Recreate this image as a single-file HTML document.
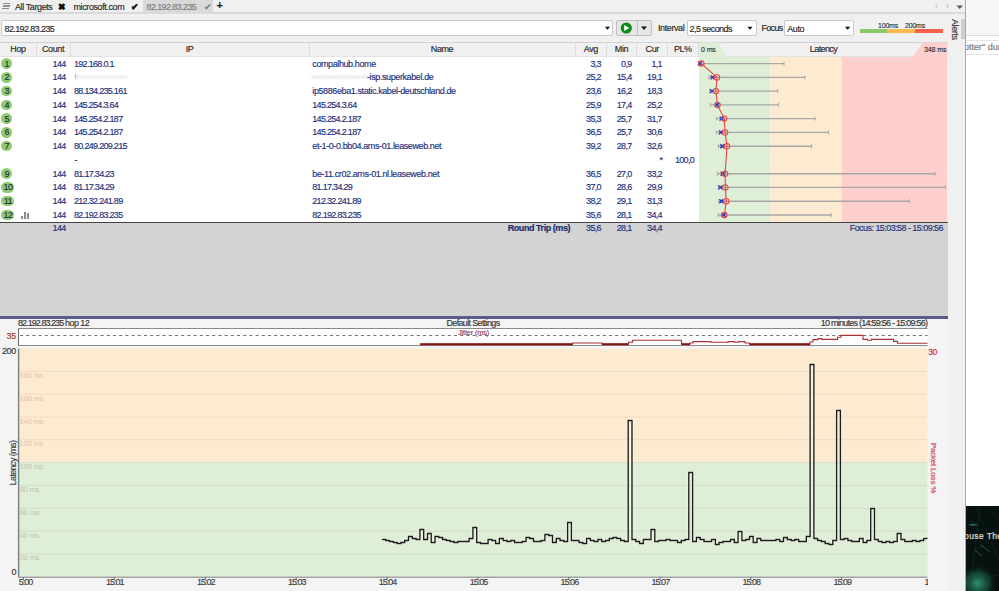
<!DOCTYPE html><html><head><meta charset="utf-8"><style>
html,body{margin:0;padding:0;}
body{width:999px;height:591px;overflow:hidden;position:relative;background:#f0f0f0;font-family:"Liberation Sans",sans-serif;}
div{position:absolute;}
.t{font-size:9px;line-height:12px;letter-spacing:-0.4px;color:#262626;white-space:nowrap;-webkit-text-stroke:0.15px currentColor;}
.n{font-size:9px;line-height:12px;letter-spacing:-0.7px;color:#22307a;white-space:nowrap;-webkit-text-stroke:0.15px currentColor;}
.nv{font-size:9px;line-height:12px;letter-spacing:-0.4px;color:#22307a;white-space:nowrap;-webkit-text-stroke:0.15px currentColor;}
.s{font-size:7px;line-height:12px;letter-spacing:-0.2px;color:#262626;white-space:nowrap;-webkit-text-stroke:0.1px currentColor;}
svg{position:absolute;left:0;top:0;}
</style></head><body>
<div style="left:966px;top:0;width:33px;height:35px;background:#f5f6f8"></div>
<div style="left:966px;top:35px;width:33px;height:1px;background:#dcdcdc"></div>
<div style="left:966px;top:36px;width:33px;height:470px;background:#ffffff"></div>
<div style="left:966px;top:40px;width:33px;height:1px;background:#e6e6e6"></div>
<div style="left:966px;top:54px;width:33px;height:1px;background:#e6e6e6"></div>
<div class="t" style="left:964px;top:41px;color:#777;font-size:9px;letter-spacing:0">otter" dur</div>
<div style="left:966px;top:506px;width:33px;height:85px;background:#071210"></div>
<svg width="999" height="591" style="left:0;top:0"><defs><radialGradient id="gb" cx="0.35" cy="0.75" r="0.6"><stop offset="0" stop-color="#2f9a70" stop-opacity="0.95"/><stop offset="0.6" stop-color="#1c5a44" stop-opacity="0.6"/><stop offset="1" stop-color="#071210" stop-opacity="0"/></radialGradient><radialGradient id="gt" cx="0.5" cy="0.5" r="0.5"><stop offset="0" stop-color="#4fb8b0" stop-opacity="0.9"/><stop offset="1" stop-color="#071210" stop-opacity="0"/></radialGradient></defs><rect x="966" y="560" width="33" height="31" fill="url(#gb)"/><ellipse cx="973" cy="524.8" rx="8" ry="1.8" fill="url(#gt)"/><path d="M966 515 L990 540 M975 506 L999 560 M966 560 L999 530 M980 506 L970 590 M990 506 L999 520 M966 580 L999 575" stroke="#1a3a36" stroke-width="0.6" opacity="0.6"/><path d="M980 545 L985 548 L990 552 M975 550 L982 556" stroke="#2e6f60" stroke-width="1" fill="none" opacity="0.7"/></svg>
<div class="t" style="left:964px;top:530px;color:#e6e2da;font-size:8.5px;letter-spacing:0.4px">ouse The</div>
<div style="left:965px;top:0;width:1px;height:591px;background:#a9a9a9"></div>
<div style="left:0;top:12px;width:965px;height:2px;background:#dadada"></div>
<div style="left:143px;top:0;width:70px;height:12px;background:#d9d9d9"></div>
<div style="left:3.4px;top:3.2px;width:6.8px;height:1.3px;background:#8d8d8d"></div>
<div style="left:3.0px;top:5.4px;width:6.8px;height:1.3px;background:#8d8d8d"></div>
<div style="left:2.2px;top:7.6px;width:6.8px;height:1.3px;background:#8d8d8d"></div>
<div class="t" style="left:15px;top:0.50px;">All Targets</div>
<div class="t" style="left:58px;top:1px;font-size:9px;font-weight:bold;letter-spacing:0;color:#111">&#x2716;</div>
<div class="t" style="left:73.5px;top:0.50px;">microsoft.com</div>
<div class="t" style="left:130.5px;top:1px;font-size:9px;font-weight:bold;color:#111">&#x2714;</div>
<div class="t" style="left:146.5px;top:1px;letter-spacing:-0.6px;color:#7d7d7d">82.192.83.235</div>
<div class="t" style="left:203.5px;top:1px;font-size:9px;color:#7d7d7d">&#x2714;</div>
<div class="t" style="left:216.5px;top:-1px;font-size:11px;font-weight:bold;color:#222">+</div>
<div class="t" style="left:935px;top:0px;color:#bbb;font-size:9px">&#x2039;</div>
<div class="t" style="left:946px;top:0px;color:#bbb;font-size:9px">&#x203a;</div>
<svg width="999" height="20" style="left:0;top:0"><path d="M956.5 5.5 L963 5.5 L959.75 9 Z" fill="#555"/></svg>
<div style="left:0.5px;top:20px;width:610.5px;height:14px;background:#fff;border:1px solid #c9c9c9;border-radius:2px"></div>
<svg width="999" height="50" style="left:0;top:0"><path d="M604.9 26.8 L610.1 26.8 L607.5 29.8 Z" fill="#111"/></svg>
<div class="t" style="left:4.5px;top:22.5px;letter-spacing:-0.6px;color:#1f1f1f">82.192.83.235</div>
<div style="left:615.5px;top:20px;width:34.5px;height:14px;background:#e6e6e6;border:1px solid #bfbfbf;border-radius:2px"></div>
<div style="left:636.5px;top:21px;width:1px;height:14px;background:#c3c3c3"></div>
<svg width="999" height="50" style="left:0;top:0"><circle cx="626.3" cy="28" r="5.6" fill="#0f8a17"/><path d="M624.2 25 L629.3 28 L624.2 31 Z" fill="#fff"/><path d="M641 26.5 L647 26.5 L644 30 Z" fill="#111"/></svg>
<div class="t" style="left:658px;top:22.00px;">Interval</div>
<div style="left:686.5px;top:20px;width:68.5px;height:14px;background:#fff;border:1px solid #c9c9c9;border-radius:2px"></div>
<svg width="999" height="50" style="left:0;top:0"><path d="M747.4 26.8 L752.6 26.8 L750 29.8 Z" fill="#111"/></svg>
<div class="t" style="left:689.5px;top:22.5px;letter-spacing:-0.55px">2,5 seconds</div>
<div class="t" style="left:761.5px;top:22.00px;letter-spacing:-0.7px">Focus</div>
<div style="left:784px;top:20px;width:68.0px;height:14px;background:#fff;border:1px solid #c9c9c9;border-radius:2px"></div>
<svg width="999" height="50" style="left:0;top:0"><path d="M845.0 26.8 L850.2 26.8 L847.6 29.8 Z" fill="#111"/></svg>
<div class="t" style="left:787.2px;top:22.5px">Auto</div>
<div style="left:860px;top:29px;width:27px;height:4px;background:#8ac96b"></div>
<div style="left:887px;top:29px;width:28px;height:4px;background:#fdba4e"></div>
<div style="left:915px;top:29px;width:27.5px;height:4px;background:#f9614e"></div>
<div class="s" style="left:878px;top:19.5px">100ms</div>
<div class="s" style="left:905px;top:19.5px">200ms</div>
<div style="left:947.5px;top:14px;width:17.5px;height:577px;background:#f0f0f0"></div>
<div class="t" style="left:945px;top:23px;width:20px;text-align:center;transform:rotate(90deg);color:#333">Alerts</div>
<div style="left:960.7px;top:18.6px;width:4px;height:20px;background:#cdcdcd"></div>
<div style="left:0;top:41.5px;width:947.5px;height:1px;background:#d2d2d2"></div>
<div style="left:0;top:42.5px;width:947.5px;height:14px;background:#f0f0f0"></div>
<div style="left:0;top:56px;width:947.5px;height:1px;background:#e3e3e3"></div>
<div style="left:35.5px;top:42.5px;width:1px;height:13.5px;background:#dcdcdc"></div>
<div style="left:69.8px;top:42.5px;width:1px;height:13.5px;background:#dcdcdc"></div>
<div style="left:308.5px;top:42.5px;width:1px;height:13.5px;background:#dcdcdc"></div>
<div style="left:574.9px;top:42.5px;width:1px;height:13.5px;background:#dcdcdc"></div>
<div style="left:605.7px;top:42.5px;width:1px;height:13.5px;background:#dcdcdc"></div>
<div style="left:636.3px;top:42.5px;width:1px;height:13.5px;background:#dcdcdc"></div>
<div style="left:667.1px;top:42.5px;width:1px;height:13.5px;background:#dcdcdc"></div>
<div class="t" style="left:-82.00px;width:200px;text-align:center;top:43.00px;">Hop</div>
<div class="t" style="left:-47.00px;width:200px;text-align:center;top:43.00px;">Count</div>
<div class="t" style="left:89.50px;width:200px;text-align:center;top:43.00px;">IP</div>
<div class="t" style="left:342.00px;width:200px;text-align:center;top:43.00px;">Name</div>
<div class="t" style="left:490.80px;width:200px;text-align:center;top:43.00px;">Avg</div>
<div class="t" style="left:521.50px;width:200px;text-align:center;top:43.00px;">Min</div>
<div class="t" style="left:552.20px;width:200px;text-align:center;top:43.00px;">Cur</div>
<div class="t" style="left:582.80px;width:200px;text-align:center;top:43.00px;">PL%</div>
<div style="left:0;top:57px;width:947.5px;height:165px;background:#fff"></div>
<svg width="999" height="240" style="left:0;top:0">
<rect x="699" y="57" width="71.41" height="165" fill="#dfeed6"/>
<rect x="770.41" y="57" width="71.41" height="165" fill="#fdebd1"/>
<rect x="841.82" y="57" width="105.68" height="165" fill="#fdd0cd"/>
<polygon points="699,42.5 717,42.5 727,57 699,57" fill="#dfeed6"/>
<polygon points="923.1,42.5 947.5,42.5 947.5,57 912.9,57" fill="#fdd0cd"/>
</svg>
<div style="left:698px;top:42.5px;width:1px;height:14px;background:#dcdcdc"></div>
<div class="s" style="left:701px;top:43.5px;letter-spacing:-0.1px">0 ms</div>
<div class="s" style="left:924px;top:43.5px;letter-spacing:-0.1px">348 ms</div>
<div class="t" style="left:723.50px;width:200px;text-align:center;top:42.50px;letter-spacing:-0.6px">Latency</div>
<div style="left:1.3px;top:58.30px;width:11px;height:10.6px;border-radius:6px;background:#8fca6c"></div>
<div class="n" style="left:1.3px;width:11px;text-align:center;top:57.60px;color:#1d2b55;letter-spacing:-0.5px">1</div>
<div class="n" style="right:933.50px;top:57.60px;">144</div>
<div class="n" style="left:74px;top:57.60px;">192.168.0.1</div>
<div class="nv" style="left:312.3px;top:57.60px;">compalhub.home</div>
<div class="n" style="right:398.20px;top:57.60px;">3,3</div>
<div class="n" style="right:367.50px;top:57.60px;">0,9</div>
<div class="n" style="right:337.20px;top:57.60px;">1,1</div>
<div style="left:1.3px;top:72.06px;width:11px;height:10.6px;border-radius:6px;background:#8fca6c"></div>
<div class="n" style="left:1.3px;width:11px;text-align:center;top:71.36px;color:#1d2b55;letter-spacing:-0.5px">2</div>
<div class="n" style="right:933.50px;top:71.36px;">144</div>
<div class="nv" style="left:75px;top:71.36px;color:#bdbdbd;filter:blur(1.1px);opacity:0.75;letter-spacing:-0.3px">t~~~~~~~~~~</div>
<div style="left:74.5px;top:74.36px;width:1px;height:5px;background:#d9a0a0;opacity:0.8"></div>
<div class="nv" style="left:311px;top:71.36px;color:#b8b8b8;filter:blur(1.1px);opacity:0.75;letter-spacing:-0.3px">~~~~~~~~~~~~~~~~</div>
<div class="nv" style="left:367px;top:71.36px;">-isp.superkabel.de</div>
<div class="n" style="right:398.20px;top:71.36px;">25,2</div>
<div class="n" style="right:367.50px;top:71.36px;">15,4</div>
<div class="n" style="right:337.20px;top:71.36px;">19,1</div>
<div style="left:1.3px;top:85.82px;width:11px;height:10.6px;border-radius:6px;background:#8fca6c"></div>
<div class="n" style="left:1.3px;width:11px;text-align:center;top:85.12px;color:#1d2b55;letter-spacing:-0.5px">3</div>
<div class="n" style="right:933.50px;top:85.12px;">144</div>
<div class="n" style="left:74px;top:85.12px;">88.134.235.161</div>
<div class="nv" style="left:312.3px;top:85.12px;">ip5886eba1.static.kabel-deutschland.de</div>
<div class="n" style="right:398.20px;top:85.12px;">23,6</div>
<div class="n" style="right:367.50px;top:85.12px;">16,2</div>
<div class="n" style="right:337.20px;top:85.12px;">18,3</div>
<div style="left:1.3px;top:99.58px;width:11px;height:10.6px;border-radius:6px;background:#8fca6c"></div>
<div class="n" style="left:1.3px;width:11px;text-align:center;top:98.88px;color:#1d2b55;letter-spacing:-0.5px">4</div>
<div class="n" style="right:933.50px;top:98.88px;">144</div>
<div class="n" style="left:74px;top:98.88px;">145.254.3.64</div>
<div class="n" style="left:312.3px;top:98.88px;">145.254.3.64</div>
<div class="n" style="right:398.20px;top:98.88px;">25,9</div>
<div class="n" style="right:367.50px;top:98.88px;">17,4</div>
<div class="n" style="right:337.20px;top:98.88px;">25,2</div>
<div style="left:1.3px;top:113.34px;width:11px;height:10.6px;border-radius:6px;background:#8fca6c"></div>
<div class="n" style="left:1.3px;width:11px;text-align:center;top:112.64px;color:#1d2b55;letter-spacing:-0.5px">5</div>
<div class="n" style="right:933.50px;top:112.64px;">144</div>
<div class="n" style="left:74px;top:112.64px;">145.254.2.187</div>
<div class="n" style="left:312.3px;top:112.64px;">145.254.2.187</div>
<div class="n" style="right:398.20px;top:112.64px;">35,3</div>
<div class="n" style="right:367.50px;top:112.64px;">25,7</div>
<div class="n" style="right:337.20px;top:112.64px;">31,7</div>
<div style="left:1.3px;top:127.10px;width:11px;height:10.6px;border-radius:6px;background:#8fca6c"></div>
<div class="n" style="left:1.3px;width:11px;text-align:center;top:126.40px;color:#1d2b55;letter-spacing:-0.5px">6</div>
<div class="n" style="right:933.50px;top:126.40px;">144</div>
<div class="n" style="left:74px;top:126.40px;">145.254.2.187</div>
<div class="n" style="left:312.3px;top:126.40px;">145.254.2.187</div>
<div class="n" style="right:398.20px;top:126.40px;">36,5</div>
<div class="n" style="right:367.50px;top:126.40px;">25,7</div>
<div class="n" style="right:337.20px;top:126.40px;">30,6</div>
<div style="left:1.3px;top:140.86px;width:11px;height:10.6px;border-radius:6px;background:#8fca6c"></div>
<div class="n" style="left:1.3px;width:11px;text-align:center;top:140.16px;color:#1d2b55;letter-spacing:-0.5px">7</div>
<div class="n" style="right:933.50px;top:140.16px;">144</div>
<div class="n" style="left:74px;top:140.16px;">80.249.209.215</div>
<div class="nv" style="left:312.3px;top:140.16px;">et-1-0-0.bb04.ams-01.leaseweb.net</div>
<div class="n" style="right:398.20px;top:140.16px;">39,2</div>
<div class="n" style="right:367.50px;top:140.16px;">28,7</div>
<div class="n" style="right:337.20px;top:140.16px;">32,6</div>
<div class="nv" style="left:74.5px;top:153.92px;">-</div>
<div class="n" style="left:659.5px;top:154.42px">*</div>
<div class="n" style="right:305.00px;top:153.92px;">100,0</div>
<div style="left:1.3px;top:168.38px;width:11px;height:10.6px;border-radius:6px;background:#8fca6c"></div>
<div class="n" style="left:1.3px;width:11px;text-align:center;top:167.68px;color:#1d2b55;letter-spacing:-0.5px">9</div>
<div class="n" style="right:933.50px;top:167.68px;">144</div>
<div class="n" style="left:74px;top:167.68px;">81.17.34.23</div>
<div class="nv" style="left:312.3px;top:167.68px;">be-11.cr02.ams-01.nl.leaseweb.net</div>
<div class="n" style="right:398.20px;top:167.68px;">36,5</div>
<div class="n" style="right:367.50px;top:167.68px;">27,0</div>
<div class="n" style="right:337.20px;top:167.68px;">33,2</div>
<div style="left:1.3px;top:182.14px;width:13.2px;height:10.6px;border-radius:6px;background:#8fca6c"></div>
<div class="n" style="left:1.3px;width:13.2px;text-align:center;top:181.44px;color:#1d2b55;letter-spacing:-0.5px">10</div>
<div class="n" style="right:933.50px;top:181.44px;">144</div>
<div class="n" style="left:74px;top:181.44px;">81.17.34.29</div>
<div class="n" style="left:312.3px;top:181.44px;">81.17.34.29</div>
<div class="n" style="right:398.20px;top:181.44px;">37,0</div>
<div class="n" style="right:367.50px;top:181.44px;">28,6</div>
<div class="n" style="right:337.20px;top:181.44px;">29,9</div>
<div style="left:1.3px;top:195.90px;width:13.2px;height:10.6px;border-radius:6px;background:#8fca6c"></div>
<div class="n" style="left:1.3px;width:13.2px;text-align:center;top:195.20px;color:#1d2b55;letter-spacing:-0.5px">11</div>
<div class="n" style="right:933.50px;top:195.20px;">144</div>
<div class="n" style="left:74px;top:195.20px;">212.32.241.89</div>
<div class="n" style="left:312.3px;top:195.20px;">212.32.241.89</div>
<div class="n" style="right:398.20px;top:195.20px;">38,2</div>
<div class="n" style="right:367.50px;top:195.20px;">29,1</div>
<div class="n" style="right:337.20px;top:195.20px;">31,3</div>
<div style="left:1.3px;top:209.66px;width:13.2px;height:10.6px;border-radius:6px;background:#8fca6c"></div>
<div class="n" style="left:1.3px;width:13.2px;text-align:center;top:208.96px;color:#1d2b55;letter-spacing:-0.5px">12</div>
<div class="n" style="right:933.50px;top:208.96px;">144</div>
<div class="n" style="left:74px;top:208.96px;">82.192.83.235</div>
<div class="n" style="left:312.3px;top:208.96px;">82.192.83.235</div>
<div class="n" style="right:398.20px;top:208.96px;">35,6</div>
<div class="n" style="right:367.50px;top:208.96px;">28,1</div>
<div class="n" style="right:337.20px;top:208.96px;">34,4</div>
<svg width="999" height="240" style="left:0;top:0">
<line x1="698.6" y1="63.6" x2="784.0" y2="63.6" stroke="#a7a7a7" stroke-width="1.4"/>
<line x1="784.0" y1="61.6" x2="784.0" y2="65.6" stroke="#a7a7a7" stroke-width="1"/>
<line x1="698.6" y1="61.6" x2="698.6" y2="65.6" stroke="#a7a7a7" stroke-width="1"/>
<line x1="709.0" y1="77.4" x2="804.9" y2="77.4" stroke="#a7a7a7" stroke-width="1.4"/>
<line x1="804.9" y1="75.4" x2="804.9" y2="79.4" stroke="#a7a7a7" stroke-width="1"/>
<line x1="709.0" y1="75.4" x2="709.0" y2="79.4" stroke="#a7a7a7" stroke-width="1"/>
<line x1="709.6" y1="91.1" x2="777.8" y2="91.1" stroke="#a7a7a7" stroke-width="1.4"/>
<line x1="777.8" y1="89.1" x2="777.8" y2="93.1" stroke="#a7a7a7" stroke-width="1"/>
<line x1="709.6" y1="89.1" x2="709.6" y2="93.1" stroke="#a7a7a7" stroke-width="1"/>
<line x1="710.4" y1="104.9" x2="778.6" y2="104.9" stroke="#a7a7a7" stroke-width="1.4"/>
<line x1="778.6" y1="102.9" x2="778.6" y2="106.9" stroke="#a7a7a7" stroke-width="1"/>
<line x1="710.4" y1="102.9" x2="710.4" y2="106.9" stroke="#a7a7a7" stroke-width="1"/>
<line x1="716.4" y1="118.6" x2="815.1" y2="118.6" stroke="#a7a7a7" stroke-width="1.4"/>
<line x1="815.1" y1="116.6" x2="815.1" y2="120.6" stroke="#a7a7a7" stroke-width="1"/>
<line x1="716.4" y1="116.6" x2="716.4" y2="120.6" stroke="#a7a7a7" stroke-width="1"/>
<line x1="716.4" y1="132.4" x2="828.4" y2="132.4" stroke="#a7a7a7" stroke-width="1.4"/>
<line x1="828.4" y1="130.4" x2="828.4" y2="134.4" stroke="#a7a7a7" stroke-width="1"/>
<line x1="716.4" y1="130.4" x2="716.4" y2="134.4" stroke="#a7a7a7" stroke-width="1"/>
<line x1="718.5" y1="146.2" x2="811.6" y2="146.2" stroke="#a7a7a7" stroke-width="1.4"/>
<line x1="811.6" y1="144.2" x2="811.6" y2="148.2" stroke="#a7a7a7" stroke-width="1"/>
<line x1="718.5" y1="144.2" x2="718.5" y2="148.2" stroke="#a7a7a7" stroke-width="1"/>
<line x1="717.3" y1="173.7" x2="935.1" y2="173.7" stroke="#a7a7a7" stroke-width="1.4"/>
<line x1="935.1" y1="171.7" x2="935.1" y2="175.7" stroke="#a7a7a7" stroke-width="1"/>
<line x1="717.3" y1="171.7" x2="717.3" y2="175.7" stroke="#a7a7a7" stroke-width="1"/>
<line x1="718.4" y1="187.4" x2="945.4" y2="187.4" stroke="#a7a7a7" stroke-width="1.4"/>
<line x1="945.4" y1="185.4" x2="945.4" y2="189.4" stroke="#a7a7a7" stroke-width="1"/>
<line x1="718.4" y1="185.4" x2="718.4" y2="189.4" stroke="#a7a7a7" stroke-width="1"/>
<line x1="718.8" y1="201.2" x2="909.5" y2="201.2" stroke="#a7a7a7" stroke-width="1.4"/>
<line x1="909.5" y1="199.2" x2="909.5" y2="203.2" stroke="#a7a7a7" stroke-width="1"/>
<line x1="718.8" y1="199.2" x2="718.8" y2="203.2" stroke="#a7a7a7" stroke-width="1"/>
<line x1="718.1" y1="215.0" x2="831.1" y2="215.0" stroke="#a7a7a7" stroke-width="1.4"/>
<line x1="831.1" y1="213.0" x2="831.1" y2="217.0" stroke="#a7a7a7" stroke-width="1"/>
<line x1="718.1" y1="213.0" x2="718.1" y2="217.0" stroke="#a7a7a7" stroke-width="1"/>
<polyline points="701.4,63.6 717.0,77.4 715.9,91.1 717.5,104.9 724.2,118.6 725.1,132.4 727.0,146.2 725.1,173.7 725.4,187.4 726.3,201.2 724.4,215.0" fill="none" stroke="#e8473e" stroke-width="1.1"/>
<path d="M697.8 61.6 L701.8 65.6 M697.8 65.6 L701.8 61.6" stroke="#1a2fd0" stroke-width="1.3"/>
<circle cx="701.4" cy="63.6" r="2.7" fill="none" stroke="#e8473e" stroke-width="1.05"/>
<path d="M710.6 75.4 L714.6 79.4 M710.6 79.4 L714.6 75.4" stroke="#1a2fd0" stroke-width="1.3"/>
<circle cx="717.0" cy="77.4" r="2.7" fill="none" stroke="#e8473e" stroke-width="1.05"/>
<path d="M710.1 89.1 L714.1 93.1 M710.1 93.1 L714.1 89.1" stroke="#1a2fd0" stroke-width="1.3"/>
<circle cx="715.9" cy="91.1" r="2.7" fill="none" stroke="#e8473e" stroke-width="1.05"/>
<path d="M715.0 102.9 L719.0 106.9 M715.0 106.9 L719.0 102.9" stroke="#1a2fd0" stroke-width="1.3"/>
<circle cx="717.5" cy="104.9" r="2.7" fill="none" stroke="#e8473e" stroke-width="1.05"/>
<path d="M719.6 116.6 L723.6 120.6 M719.6 120.6 L723.6 116.6" stroke="#1a2fd0" stroke-width="1.3"/>
<circle cx="724.2" cy="118.6" r="2.7" fill="none" stroke="#e8473e" stroke-width="1.05"/>
<path d="M718.9 130.4 L722.9 134.4 M718.9 134.4 L722.9 130.4" stroke="#1a2fd0" stroke-width="1.3"/>
<circle cx="725.1" cy="132.4" r="2.7" fill="none" stroke="#e8473e" stroke-width="1.05"/>
<path d="M720.3 144.2 L724.3 148.2 M720.3 148.2 L724.3 144.2" stroke="#1a2fd0" stroke-width="1.3"/>
<circle cx="727.0" cy="146.2" r="2.7" fill="none" stroke="#e8473e" stroke-width="1.05"/>
<path d="M720.7 171.7 L724.7 175.7 M720.7 175.7 L724.7 171.7" stroke="#1a2fd0" stroke-width="1.3"/>
<circle cx="725.1" cy="173.7" r="2.7" fill="none" stroke="#e8473e" stroke-width="1.05"/>
<path d="M718.4 185.4 L722.4 189.4 M718.4 189.4 L722.4 185.4" stroke="#1a2fd0" stroke-width="1.3"/>
<circle cx="725.4" cy="187.4" r="2.7" fill="none" stroke="#e8473e" stroke-width="1.05"/>
<path d="M719.4 199.2 L723.4 203.2 M719.4 203.2 L723.4 199.2" stroke="#1a2fd0" stroke-width="1.3"/>
<circle cx="726.3" cy="201.2" r="2.7" fill="none" stroke="#e8473e" stroke-width="1.05"/>
<path d="M721.6 213.0 L725.6 217.0 M721.6 217.0 L725.6 213.0" stroke="#1a2fd0" stroke-width="1.3"/>
<circle cx="724.4" cy="215.0" r="2.7" fill="none" stroke="#e8473e" stroke-width="1.05"/>
</svg>
<div style="left:21.2px;top:215.5px;width:1.6px;height:3px;background:#8a8a8a"></div>
<div style="left:24.2px;top:211.5px;width:1.6px;height:7px;background:#8a8a8a"></div>
<div style="left:27.2px;top:213px;width:1.6px;height:5.5px;background:#8a8a8a"></div>
<div style="left:0;top:223px;width:947.5px;height:93px;background:#d3d3d3"></div>
<div style="left:0;top:221.5px;width:947.5px;height:1.6px;background:#454545"></div>
<div class="n" style="right:933.50px;top:221.60px;">144</div>
<div class="nv" style="right:429.00px;top:221.60px;color:#1b2a6b;letter-spacing:-0.45px"><b>Round Trip (ms)</b></div>
<div class="n" style="right:398.20px;top:221.60px;">35,6</div>
<div class="n" style="right:367.50px;top:221.60px;">28,1</div>
<div class="n" style="right:337.20px;top:221.60px;">34,4</div>
<div class="nv" style="right:56.00px;top:221.60px;letter-spacing:-0.55px">Focus: 15:03:58 - 15:09:56</div>
<div style="left:0;top:316px;width:947.5px;height:3px;background:#5b5b8b"></div>
<div style="left:0;top:319px;width:947.5px;height:272px;background:#f4f4f4"></div>
<div class="t" style="left:18px;top:317.20px;color:#333;letter-spacing:-0.6px"><span style="letter-spacing:-0.95px">82.192.83.235</span> hop 12</div>
<div class="t" style="left:373.00px;width:200px;text-align:center;top:317.20px;color:#333;letter-spacing:-0.65px">Default Settings</div>
<div class="t" style="right:71.70px;top:317.20px;color:#333;letter-spacing:-0.75px">10 minutes (14:59:56 - 15:09:56)</div>
<svg width="999" height="591" style="left:0;top:0">
<rect x="18.2" y="328.5" width="909.3" height="17" fill="#fdfdfd"/>
<line x1="18.2" y1="328.5" x2="927.5" y2="328.5" stroke="#8a8a8a" stroke-width="1"/>
<line x1="18.2" y1="345.5" x2="927.5" y2="345.5" stroke="#8a8a8a" stroke-width="1"/>
<line x1="18.5" y1="328.5" x2="18.5" y2="345.5" stroke="#6a6a6a" stroke-width="1"/>
<line x1="20" y1="335.5" x2="927.5" y2="335.5" stroke="#747474" stroke-width="1.1" stroke-dasharray="3 3.2"/>
<polyline points="420.2,344.3 572.5,344.3 572.5,343 602,343 602,344.3 628.5,344.3 628.5,342.2 632.5,342.2 632.5,340.3 681.5,340.3 681.5,344.3 690,344.3 690,343 693,343 693,341.6 711,341.6 711,342.3 728,342.3 728,341.6 734.5,341.6 734.5,342.3 738.5,342.3 738.5,341.6 745,341.6 745,343 749.5,343 749.5,344.3 810,344.3 810,342 813,342 813,339.6 818,339.6 818,338.6 821.5,338.6 821.5,339.4 837.5,339.4 837.5,337.3 841,337.3 841,335.4 863,335.4 863,339.4 867.5,339.4 867.5,340.3 871.5,340.3 871.5,339.4 893.5,339.4 893.5,341.4 897.5,341.4 897.5,343.2 927.5,343.2" fill="none" stroke="#a83232" stroke-width="1.1"/>
<line x1="420.2" y1="344.2" x2="572.5" y2="344.2" stroke="#860f0f" stroke-width="1.9"/>
<line x1="602" y1="344.2" x2="628.5" y2="344.2" stroke="#860f0f" stroke-width="1.9"/>
<line x1="681.5" y1="344.2" x2="690" y2="344.2" stroke="#860f0f" stroke-width="1.9"/>
<line x1="749.5" y1="344.2" x2="810" y2="344.2" stroke="#860f0f" stroke-width="1.9"/>
<rect x="18.2" y="348.6" width="909.3" height="114.05" fill="#fdebd1"/>
<rect x="18.2" y="462.65" width="909.3" height="114.05" fill="#dfeed6"/>
<line x1="18.2" y1="553.9" x2="927.5" y2="553.9" stroke="#d0dec8" stroke-width="1"/>
<line x1="18.2" y1="531.1" x2="927.5" y2="531.1" stroke="#d0dec8" stroke-width="1"/>
<line x1="18.2" y1="508.3" x2="927.5" y2="508.3" stroke="#d0dec8" stroke-width="1"/>
<line x1="18.2" y1="485.5" x2="927.5" y2="485.5" stroke="#d0dec8" stroke-width="1"/>
<line x1="18.2" y1="462.7" x2="927.5" y2="462.7" stroke="#d0dec8" stroke-width="1"/>
<line x1="18.2" y1="439.8" x2="927.5" y2="439.8" stroke="#ecdcc3" stroke-width="1"/>
<line x1="18.2" y1="417.0" x2="927.5" y2="417.0" stroke="#ecdcc3" stroke-width="1"/>
<line x1="18.2" y1="394.2" x2="927.5" y2="394.2" stroke="#ecdcc3" stroke-width="1"/>
<line x1="18.2" y1="371.4" x2="927.5" y2="371.4" stroke="#ecdcc3" stroke-width="1"/>
<line x1="18.6" y1="348.6" x2="18.6" y2="577.7" stroke="#7d7d7d" stroke-width="1.4"/>
<line x1="18.2" y1="577.2" x2="927.5" y2="577.2" stroke="#a3a3a3" stroke-width="1.5"/>
<path d="M382.0 539.5 H385.8 V540.5 H389.6 V541.5 H393.4 V542.5 H397.2 V543.5 H400.9 V542.5 H404.7 V540.5 H408.5 V536.5 H412.3 V538.5 H416.1 V539.5 H419.9 V529.5 H423.7 V539.5 H427.5 V533.5 H431.2 V542.5 H435.0 V536.5 H438.8 V537.5 H442.6 V539.5 H446.4 V540.5 H450.2 V541.5 H454.0 V542.5 H457.8 V541.5 H461.6 V541.5 H465.3 V541.5 H469.1 V538.5 H472.9 V527.5 H476.7 V542.5 H480.5 V543.5 H484.3 V543.5 H488.1 V539.5 H491.9 V540.5 H495.6 V543.5 H499.4 V538.5 H503.2 V540.5 H507.0 V541.5 H510.8 V540.5 H514.6 V542.5 H518.4 V542.5 H522.2 V541.5 H526.0 V537.5 H529.7 V538.5 H533.5 V541.5 H537.3 V541.5 H541.1 V540.5 H544.9 V534.5 H548.7 V535.5 H552.5 V542.5 H556.3 V538.5 H560.0 V540.5 H563.8 V541.5 H567.6 V522.5 H571.4 V540.5 H575.2 V540.5 H579.0 V542.5 H582.8 V543.5 H586.6 V538.5 H590.4 V540.5 H594.1 V541.5 H597.9 V539.5 H601.7 V541.5 H605.5 V540.5 H609.3 V538.5 H613.1 V537.5 H616.9 V538.5 H620.7 V540.5 H624.4 V541.5 H628.2 V420.5 H632.0 V539.5 H635.8 V541.5 H639.6 V543.5 H643.4 V539.5 H647.2 V539.5 H651.0 V529.5 H654.8 V541.5 H658.5 V540.5 H662.3 V540.5 H666.1 V539.5 H669.9 V540.5 H673.7 V540.5 H677.5 V542.5 H681.3 V540.5 H685.1 V539.5 H688.8 V472.5 H692.6 V541.5 H696.4 V537.5 H700.2 V539.5 H704.0 V541.5 H707.8 V541.5 H711.6 V539.5 H715.4 V544.5 H719.1 V542.5 H722.9 V541.5 H726.7 V541.5 H730.5 V539.5 H734.3 V542.5 H738.1 V531.5 H741.9 V540.5 H745.7 V539.5 H749.5 V536.5 H753.2 V542.5 H757.0 V538.5 H760.8 V540.5 H764.6 V540.5 H768.4 V540.5 H772.2 V540.5 H776.0 V539.5 H779.8 V541.5 H783.5 V537.5 H787.3 V539.5 H791.1 V540.5 H794.9 V539.5 H798.7 V541.5 H802.5 V541.5 H806.3 V536.5 H810.1 V364.5 H813.9 V538.5 H817.6 V540.5 H821.4 V541.5 H825.2 V543.5 H829.0 V544.5 H832.8 V540.5 H836.6 V410.5 H840.4 V539.5 H844.2 V538.5 H847.9 V540.5 H851.7 V541.5 H855.5 V541.5 H859.3 V538.5 H863.1 V542.5 H866.9 V540.5 H870.7 V508.5 H874.5 V539.5 H878.3 V541.5 H882.0 V542.5 H885.8 V541.5 H889.6 V542.5 H893.4 V541.5 H897.2 V533.5 H901.0 V539.5 H904.8 V541.5 H908.6 V541.5 H912.3 V540.5 H916.1 V541.5 H919.9 V540.5 H923.7 V538.5 H927.5" fill="none" stroke="#fbfbf0" stroke-width="3" stroke-opacity="0.5"/>
<path d="M382.0 539.5 H385.8 V540.5 H389.6 V541.5 H393.4 V542.5 H397.2 V543.5 H400.9 V542.5 H404.7 V540.5 H408.5 V536.5 H412.3 V538.5 H416.1 V539.5 H419.9 V529.5 H423.7 V539.5 H427.5 V533.5 H431.2 V542.5 H435.0 V536.5 H438.8 V537.5 H442.6 V539.5 H446.4 V540.5 H450.2 V541.5 H454.0 V542.5 H457.8 V541.5 H461.6 V541.5 H465.3 V541.5 H469.1 V538.5 H472.9 V527.5 H476.7 V542.5 H480.5 V543.5 H484.3 V543.5 H488.1 V539.5 H491.9 V540.5 H495.6 V543.5 H499.4 V538.5 H503.2 V540.5 H507.0 V541.5 H510.8 V540.5 H514.6 V542.5 H518.4 V542.5 H522.2 V541.5 H526.0 V537.5 H529.7 V538.5 H533.5 V541.5 H537.3 V541.5 H541.1 V540.5 H544.9 V534.5 H548.7 V535.5 H552.5 V542.5 H556.3 V538.5 H560.0 V540.5 H563.8 V541.5 H567.6 V522.5 H571.4 V540.5 H575.2 V540.5 H579.0 V542.5 H582.8 V543.5 H586.6 V538.5 H590.4 V540.5 H594.1 V541.5 H597.9 V539.5 H601.7 V541.5 H605.5 V540.5 H609.3 V538.5 H613.1 V537.5 H616.9 V538.5 H620.7 V540.5 H624.4 V541.5 H628.2 V420.5 H632.0 V539.5 H635.8 V541.5 H639.6 V543.5 H643.4 V539.5 H647.2 V539.5 H651.0 V529.5 H654.8 V541.5 H658.5 V540.5 H662.3 V540.5 H666.1 V539.5 H669.9 V540.5 H673.7 V540.5 H677.5 V542.5 H681.3 V540.5 H685.1 V539.5 H688.8 V472.5 H692.6 V541.5 H696.4 V537.5 H700.2 V539.5 H704.0 V541.5 H707.8 V541.5 H711.6 V539.5 H715.4 V544.5 H719.1 V542.5 H722.9 V541.5 H726.7 V541.5 H730.5 V539.5 H734.3 V542.5 H738.1 V531.5 H741.9 V540.5 H745.7 V539.5 H749.5 V536.5 H753.2 V542.5 H757.0 V538.5 H760.8 V540.5 H764.6 V540.5 H768.4 V540.5 H772.2 V540.5 H776.0 V539.5 H779.8 V541.5 H783.5 V537.5 H787.3 V539.5 H791.1 V540.5 H794.9 V539.5 H798.7 V541.5 H802.5 V541.5 H806.3 V536.5 H810.1 V364.5 H813.9 V538.5 H817.6 V540.5 H821.4 V541.5 H825.2 V543.5 H829.0 V544.5 H832.8 V540.5 H836.6 V410.5 H840.4 V539.5 H844.2 V538.5 H847.9 V540.5 H851.7 V541.5 H855.5 V541.5 H859.3 V538.5 H863.1 V542.5 H866.9 V540.5 H870.7 V508.5 H874.5 V539.5 H878.3 V541.5 H882.0 V542.5 H885.8 V541.5 H889.6 V542.5 H893.4 V541.5 H897.2 V533.5 H901.0 V539.5 H904.8 V541.5 H908.6 V541.5 H912.3 V540.5 H916.1 V541.5 H919.9 V540.5 H923.7 V538.5 H927.5" fill="none" stroke="#1c1c1c" stroke-width="1.35"/>
<line x1="23.4" y1="577" x2="23.4" y2="580" stroke="#555" stroke-width="0.8"/>
<line x1="114.3" y1="577" x2="114.3" y2="580" stroke="#555" stroke-width="0.8"/>
<line x1="205.2" y1="577" x2="205.2" y2="580" stroke="#555" stroke-width="0.8"/>
<line x1="296.2" y1="577" x2="296.2" y2="580" stroke="#555" stroke-width="0.8"/>
<line x1="387.1" y1="577" x2="387.1" y2="580" stroke="#555" stroke-width="0.8"/>
<line x1="478.0" y1="577" x2="478.0" y2="580" stroke="#555" stroke-width="0.8"/>
<line x1="568.9" y1="577" x2="568.9" y2="580" stroke="#555" stroke-width="0.8"/>
<line x1="659.9" y1="577" x2="659.9" y2="580" stroke="#555" stroke-width="0.8"/>
<line x1="750.8" y1="577" x2="750.8" y2="580" stroke="#555" stroke-width="0.8"/>
<line x1="841.7" y1="577" x2="841.7" y2="580" stroke="#555" stroke-width="0.8"/>
</svg>
<div class="s" style="left:19.5px;top:552.4px;color:#bfccb6;font-size:7.5px;letter-spacing:-0.1px">20 ms</div>
<div class="s" style="left:19.5px;top:529.6px;color:#bfccb6;font-size:7.5px;letter-spacing:-0.1px">40 ms</div>
<div class="s" style="left:19.5px;top:506.8px;color:#bfccb6;font-size:7.5px;letter-spacing:-0.1px">60 ms</div>
<div class="s" style="left:19.5px;top:484.0px;color:#bfccb6;font-size:7.5px;letter-spacing:-0.1px">80 ms</div>
<div class="s" style="left:19.5px;top:461.2px;color:#bfccb6;font-size:7.5px;letter-spacing:-0.1px">100 ms</div>
<div class="s" style="left:19.5px;top:438.3px;color:#dccbb2;font-size:7.5px;letter-spacing:-0.1px">120 ms</div>
<div class="s" style="left:19.5px;top:415.5px;color:#dccbb2;font-size:7.5px;letter-spacing:-0.1px">140 ms</div>
<div class="s" style="left:19.5px;top:392.7px;color:#dccbb2;font-size:7.5px;letter-spacing:-0.1px">160 ms</div>
<div class="s" style="left:19.5px;top:369.9px;color:#dccbb2;font-size:7.5px;letter-spacing:-0.1px">180 ms</div>
<div class="n" style="right:983.20px;top:344.80px;color:#333;letter-spacing:-0.4px">200</div>
<div class="n" style="right:983.20px;top:565.90px;color:#333">0</div>
<div class="n" style="right:983.00px;top:329.60px;color:#a63636;letter-spacing:-0.3px">35</div>
<div class="n" style="left:928.3px;top:346.20px;color:#c9283a;letter-spacing:-0.6px;font-size:8.5px">30</div>
<div class="s" style="left:458px;top:327px;color:#9a3434;font-size:7.5px">Jitter (ms)</div>
<div class="t" style="left:-17.5px;top:457px;width:60px;text-align:center;transform:rotate(-90deg);color:#3a3a4a;letter-spacing:-0.6px">Latency (ms)</div>
<div class="t" style="left:902.5px;top:462px;width:60px;text-align:center;transform:rotate(90deg);color:#cf3f57;font-size:8px;letter-spacing:-0.2px">Packet Loss %</div>
<div style="left:18.2px;top:575px;width:909.8px;height:16px;overflow:hidden">
<div class="n" style="left:0.5px;top:1px;color:#3a3f3a;letter-spacing:-1.0px">5:00</div>
<div class="n" style="left:76.6px;width:40px;text-align:center;top:1px;color:#3a3f3a;letter-spacing:-1.0px">15:01</div>
<div class="n" style="left:167.5px;width:40px;text-align:center;top:1px;color:#3a3f3a;letter-spacing:-1.0px">15:02</div>
<div class="n" style="left:258.5px;width:40px;text-align:center;top:1px;color:#3a3f3a;letter-spacing:-1.0px">15:03</div>
<div class="n" style="left:349.4px;width:40px;text-align:center;top:1px;color:#3a3f3a;letter-spacing:-1.0px">15:04</div>
<div class="n" style="left:440.3px;width:40px;text-align:center;top:1px;color:#3a3f3a;letter-spacing:-1.0px">15:05</div>
<div class="n" style="left:531.2px;width:40px;text-align:center;top:1px;color:#3a3f3a;letter-spacing:-1.0px">15:06</div>
<div class="n" style="left:622.2px;width:40px;text-align:center;top:1px;color:#3a3f3a;letter-spacing:-1.0px">15:07</div>
<div class="n" style="left:713.1px;width:40px;text-align:center;top:1px;color:#3a3f3a;letter-spacing:-1.0px">15:08</div>
<div class="n" style="left:804.0px;width:40px;text-align:center;top:1px;color:#3a3f3a;letter-spacing:-1.0px">15:09</div>
<div class="n" style="left:895.0px;width:40px;text-align:center;top:1px;color:#3a3f3a;letter-spacing:-1.0px">15:10</div>
</div>
</body></html>
